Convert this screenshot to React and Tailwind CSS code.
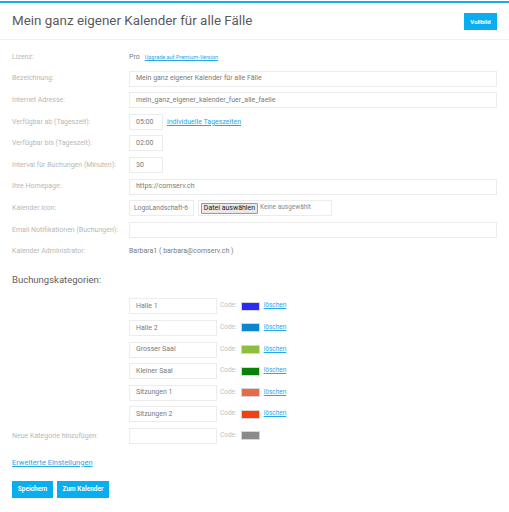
import React from 'react';

const fields = [
  { label: 'Bezeichnung:', value: 'Mein ganz eigener Kalender für alle Fälle' },
  { label: 'Internet Adresse:', value: 'mein_ganz_eigener_kalender_fuer_alle_faelle' },
];

const categories = [
  { name: 'Halle 1', color: 'bg-[#2b2bf5]' },
  { name: 'Halle 2', color: 'bg-[#0a86cc]' },
  { name: 'Grosser Saal', color: 'bg-[#8bbf3c]' },
  { name: 'Kleiner Saal', color: 'bg-[#078207]' },
  { name: 'Sitzungen 1', color: 'bg-[#e96a4a]' },
  { name: 'Sitzungen 2', color: 'bg-[#f2400e]' },
];

const Row = ({ label, children }) => (
  <div className="flex h-4 items-center">
    <div className="w-[117px] shrink-0 text-[7px] text-[#b8b8b8]">{label}</div>
    <div className="flex h-4 min-w-0 flex-1 items-center">{children}</div>
  </div>
);

const Box = ({ className = '', children }) => (
  <div className={`flex h-4 items-center overflow-hidden whitespace-nowrap border border-[#ececec] bg-white pl-[6px] text-[7px] text-[#7a7a7a] ${className}`}>
    {children}
  </div>
);

const Swatch = ({ color }) => (
  <span className={`ml-[4px] inline-block h-[9px] w-[19px] border border-[#d6d6d6] ${color}`} />
);

export default function App() {
  return (
    <div className="min-h-[512px] w-[509px] bg-white font-['Roboto','Liberation_Sans',sans-serif]">
      <div className="mt-px h-[2px] bg-[#1aa9ea]" />
      <div className="flex h-[37px] items-center justify-between border-b border-[#f1f1f1] px-3">
        <h1 className="text-[13.4px] text-[#5a5a5a]">Mein ganz eigener Kalender für alle Fälle</h1>
        <button className="flex h-[17px] w-[33px] items-center justify-center bg-[#09aef0] text-[6px] font-bold text-white">
          Vollbild
        </button>
      </div>

      <div className="flex flex-col gap-[5.6px] px-3 pt-[9px]">
        <Row label="Lizenz:">
          <span className="text-[7px] text-[#7a7a7a]">Pro</span>
          <a className="ml-[5px] text-[5.5px] text-[#27a7e8] underline">Upgrade auf Premium-Version</a>
        </Row>
        {fields.map((f) => (
          <Row key={f.label} label={f.label}>
            <Box className="flex-1">{f.value}</Box>
          </Row>
        ))}
        <Row label="Verfügbar ab (Tageszeit):">
          <Box className="w-[34px]">05:00</Box>
          <a className="ml-1 text-[7px] text-[#27a7e8] underline">individuelle Tageszeiten</a>
        </Row>
        <Row label="Verfügbar bis (Tageszeit):">
          <Box className="w-[34px]">02:00</Box>
        </Row>
        <Row label="Interval für Buchungen (Minuten):">
          <Box className="w-[34px]">30</Box>
        </Row>
        <Row label="Ihre Homepage:">
          <Box className="flex-1">https://comserv.ch</Box>
        </Row>
        <Row label="Kalender Icon:">
          <div className="flex h-4 w-[65px] items-center overflow-hidden whitespace-nowrap border border-[#ececec] bg-white pl-[4px] text-[6.7px] text-[#7a7a7a]">
            LogoLandschaft-6
          </div>
          <div className="ml-1 flex h-4 w-[134px] items-center border border-[#ececec] pl-[2px] text-[6.5px]">
            <span className="flex h-[11px] w-[57px] items-center justify-center rounded-[1px] border border-[#9a9a9a] bg-[#e9e9e9] text-[7px] text-[#222]">
              Datei auswählen
            </span>
            <span className="ml-[2px] text-[#8a8a8a]">Keine ausgewählt</span>
          </div>
        </Row>
        <Row label="Email Notifikationen (Buchungen):">
          <Box className="flex-1" />
        </Row>
        <Row label="Kalender Administrator:">
          <span className="text-[7px] text-[#7a7a7a]">Barbara1 ( barbara@comserv.ch )</span>
        </Row>
      </div>

      <h2 className="mt-[14px] px-3 text-[9.5px] leading-[14px] text-[#5e5e5e]">Buchungskategorien:</h2>

      <div className="mt-[11px] flex flex-col gap-[5.6px] px-3">
        {categories.map((c) => (
          <Row key={c.name} label="">
            <Box className="w-[88px]">{c.name}</Box>
            <span className="ml-[3px] text-[6.5px] text-[#c2c2c2]">Code:</span>
            <Swatch color={c.color} />
            <a className="ml-[4px] text-[6.5px] text-[#27a7e8] underline">löschen</a>
          </Row>
        ))}
        <Row label="Neue Kategorie hinzufügen:">
          <Box className="w-[88px]" />
          <span className="ml-[3px] text-[6.5px] text-[#c2c2c2]">Code:</span>
          <Swatch color="bg-[#8a8a8a]" />
        </Row>
      </div>

      <div className="mt-[4px] px-3">
        <a className="text-[7.5px] text-[#27a7e8] underline">Erweiterte Einstellungen</a>
      </div>

      <div className="mt-[9px] flex gap-1 px-3">
        <button className="flex h-[17px] w-[41px] items-center justify-center bg-[#09aef0] text-[6.5px] font-bold text-white">
          Speichern
        </button>
        <button className="flex h-[17px] w-[52px] items-center justify-center bg-[#09aef0] text-[6.5px] font-bold text-white">
          Zum Kalender
        </button>
      </div>
    </div>
  );
}
